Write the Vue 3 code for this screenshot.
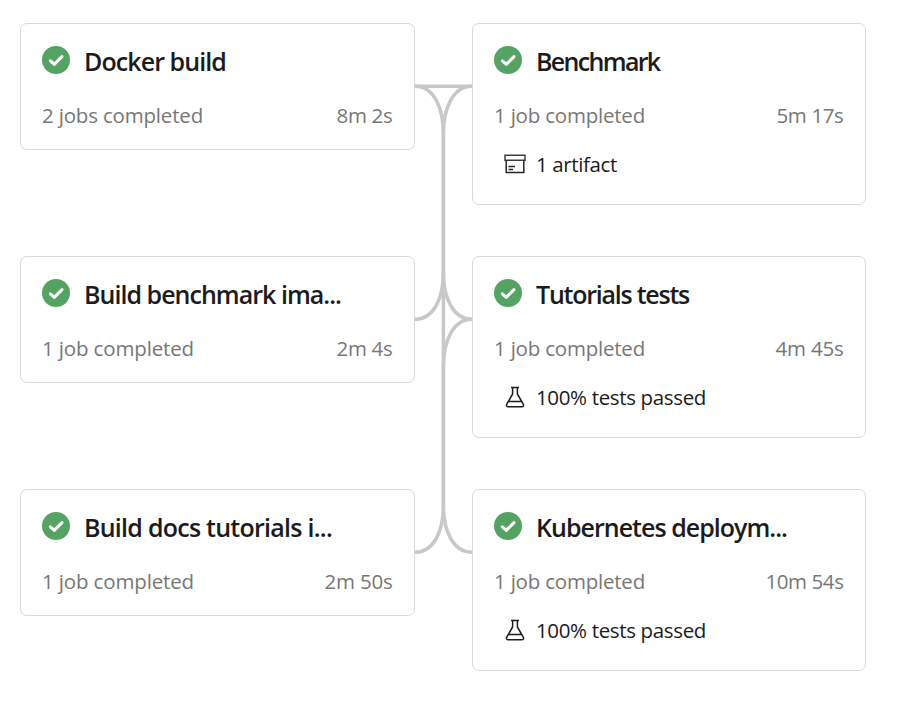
<script setup>
const columns = [
  [
    { title: 'Docker build', width: 142, jobs: '2 jobs completed', jobsWidth: 161, time: '8m 2s', timeWidth: 56 },
    { title: 'Build benchmark ima...', width: 257, jobs: '1 job completed', jobsWidth: 152, time: '2m 4s', timeWidth: 56 },
    { title: 'Build docs tutorials i...', width: 248, jobs: '1 job completed', jobsWidth: 152, time: '2m 50s', timeWidth: 68 },
  ],
  [
    { title: 'Benchmark', width: 123.5, jobs: '1 job completed', jobsWidth: 151, time: '5m 17s', timeWidth: 67, icon: 'artifact', note: '1 artifact', noteWidth: 81 },
    { title: 'Tutorials tests', width: 153, jobs: '1 job completed', jobsWidth: 151, time: '4m 45s', timeWidth: 68, icon: 'tests', note: '100% tests passed', noteWidth: 170 },
    { title: 'Kubernetes deploym...', width: 251, jobs: '1 job completed', jobsWidth: 151, time: '10m 54s', timeWidth: 78, icon: 'tests', note: '100% tests passed', noteWidth: 170 },
  ],
]

// Spreads or tightens the tracking so a label fills its measured width.
const fit = (el, width) => {
  const natural = el.getBoundingClientRect().width
  el.style.letterSpacing = `${(width - natural) / el.textContent.length}px`
}
const vFit = { mounted: (el, binding) => fit(el, binding.value) }
</script>

<template>
  <main class="pipeline">
    <svg class="links" width="58" height="480" viewBox="414 80 58 480" fill="none">
      <path d="M415 86.3H472" />
      <path d="M415 86.3C434 86.3 443.4 108 443.4 134V505C443.4 531 453 552.3 472 552.3" />
      <path d="M415 319.3C434 319.3 443.4 298 443.4 272V134C443.4 108 453 86.3 472 86.3" />
      <path d="M443.4 272C443.4 298 453 319.3 472 319.3" />
      <path d="M415 552.3C434 552.3 443.4 531 443.4 505V367C443.4 341 453 319.3 472 319.3" />
    </svg>
    <section v-for="(stages, c) in columns" :key="c" class="column">
      <div v-for="stage in stages" :key="stage.title" class="slot">
        <article class="card">
          <header class="head">
            <svg class="status" width="28" height="28" viewBox="0 0 28 28">
              <circle cx="14" cy="14" r="14" fill="#55a362" />
              <path d="M8.4 14.8 12.3 18.4 20 10.6" fill="none" stroke="#fff" stroke-width="3" stroke-linecap="round" stroke-linejoin="round" />
            </svg>
            <h2 class="title"><span v-fit="stage.width">{{ stage.title }}</span></h2>
          </header>
          <div class="summary">
            <span v-fit="stage.jobsWidth">{{ stage.jobs }}</span>
            <span v-fit="stage.timeWidth">{{ stage.time }}</span>
          </div>
          <div v-if="stage.note" class="note">
            <svg v-if="stage.icon === 'artifact'" width="22" height="22" viewBox="0 0 22 22" fill="none" stroke="#25252c" stroke-width="1.5">
              <path d="M1 2.2H21V7.3H1Z" stroke="#3f3c40" />
              <path d="M2.2 7.3V19.4H19.8V7.3" />
              <path d="M4.5 13.5H11M4.5 16.5H9" stroke-width="1.3" />
            </svg>
            <svg v-else width="22" height="22" viewBox="0 0 22 22" fill="none" stroke="#1c1c1c" stroke-width="1.5" stroke-linejoin="round">
              <path d="M7 1.5H15M8.6 1.5V8L2.9 17.8C2 19.5 2.5 20.8 4.2 20.8H17.8C19.5 20.8 20 19.5 19.1 17.8L13.4 8V1.5M4.6 15.5H17.4" />
            </svg>
            <span v-fit="stage.noteWidth">{{ stage.note }}</span>
          </div>
        </article>
      </div>
    </section>
  </main>
</template>

<style>
body {
  background: #fff;
}
</style>

<style scoped>
.pipeline {
  position: relative;
  box-sizing: border-box;
  width: 901px;
  height: 703px;
  padding: 23px 35px 0 20px;
  display: grid;
  grid-template-columns: 395px 394px;
  column-gap: 57px;
  overflow: hidden;
  color: #1b1b1b;
  font-family: "Segoe UI", "Open Sans", "Noto Sans", sans-serif;
}
.links {
  position: absolute;
  left: 414px;
  top: 80px;
  stroke: #c8c8c8;
  stroke-width: 3.5;
}
.column {
  position: relative;
}
.slot {
  height: 233px;
}
.card {
  box-sizing: border-box;
  border: 1px solid #d9d9d9;
  border-radius: 7px;
  background: #fff;
  padding: 21px 21px 18px;
}
.head {
  display: flex;
  align-items: center;
  gap: 14px;
  height: 31px;
}
.status {
  flex: none;
  margin-top: -1px;
}
.title {
  margin: 1px 0 0;
  font-size: 25px;
  line-height: 31px;
  font-weight: 600;
  font-stretch: 94%;
  white-space: nowrap;
}
.summary {
  display: flex;
  justify-content: space-between;
  margin-top: 24px;
  height: 31px;
  padding-right: 0.5px;
  font-size: 20.5px;
  font-stretch: 98%;
  line-height: 30px;
  color: #777;
  white-space: nowrap;
}
.note {
  display: flex;
  align-items: center;
  gap: 10px;
  height: 30px;
  margin: 18px 0 7px 10px;
  font-size: 20.5px;
  font-stretch: 98%;
  line-height: 30px;
  white-space: nowrap;
}
</style>
